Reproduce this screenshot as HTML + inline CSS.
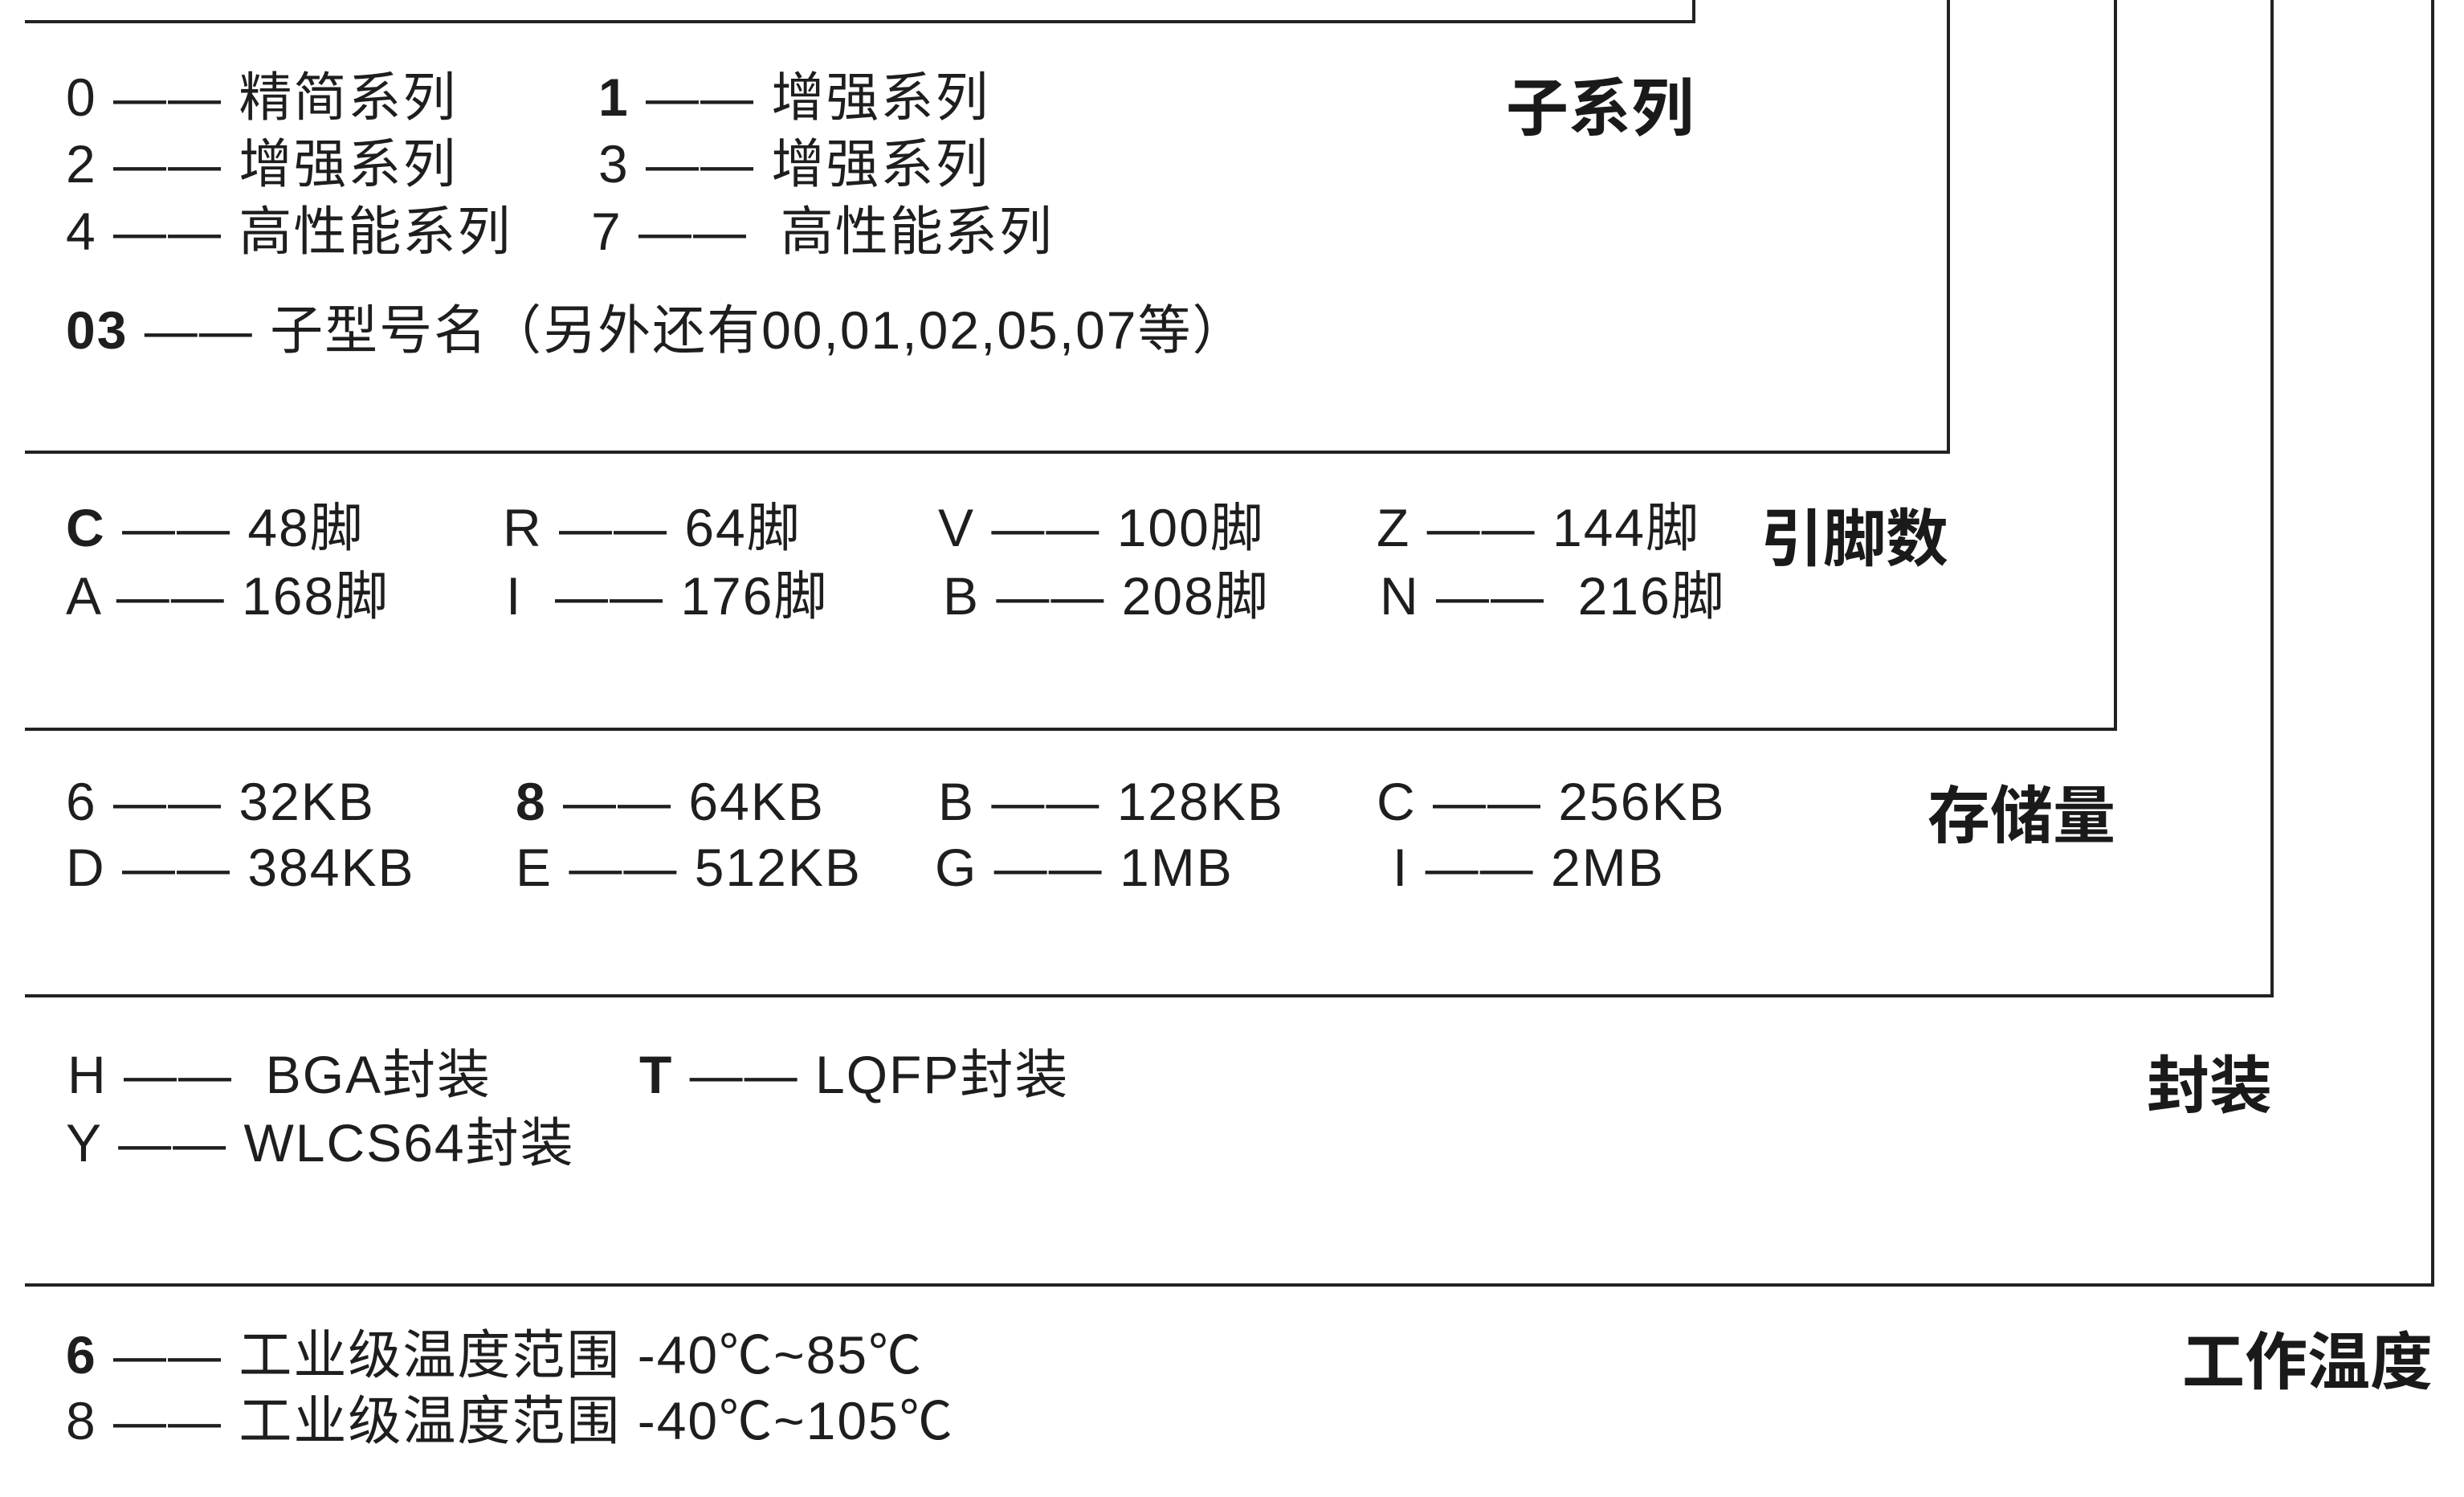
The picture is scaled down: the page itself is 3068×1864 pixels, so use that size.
<!DOCTYPE html>
<html><head><meta charset="utf-8">
<style>
html,body{margin:0;padding:0;background:#fff;}
body{width:3068px;height:1864px;position:relative;overflow:hidden;font-family:"Liberation Sans","Noto Sans CJK SC",sans-serif;color:#1e1e1e;}
.t{position:absolute;font-size:66px;line-height:66px;white-space:pre;letter-spacing:2px;}
.b{font-weight:bold;}
.h{position:absolute;font-size:78px;line-height:80px;font-weight:bold;white-space:pre;font-family:"Noto Sans CJK SC",sans-serif;color:#1a1a1a;}
.hl{position:absolute;height:4px;background:#222;left:31px;}
.vl{position:absolute;width:4px;background:#222;top:0;}
</style></head><body>
<div class="hl" style="top:25px;width:2080px"></div><div class="vl" style="left:2107px;height:29px"></div>
<div class="hl" style="top:561px;width:2397px"></div><div class="vl" style="left:2424px;height:565px"></div>
<div class="hl" style="top:906px;width:2605px"></div><div class="vl" style="left:2632px;height:910px"></div>
<div class="hl" style="top:1238px;width:2800px"></div><div class="vl" style="left:2827px;height:1242px"></div>
<div class="hl" style="top:1598px;width:3000px"></div><div class="vl" style="left:3027px;height:1602px"></div>

<div class="t" style="left:82px;top:88px">0 —— 精简系列</div>
<div class="t" style="left:745px;top:88px"><b>1</b> —— 增强系列</div>
<div class="t" style="left:82px;top:171px">2 —— 增强系列</div>
<div class="t" style="left:745px;top:171px">3 —— 增强系列</div>
<div class="t" style="left:82px;top:255px">4 —— 高性能系列</div>
<div class="t" style="left:736px;top:255px">7 ——  高性能系列</div>
<div class="t" style="left:82px;top:378px"><b>03</b> —— 子型号名（另外还有00,01,02,05,07等）</div>
<div class="h" style="right:959px;top:89px">子系列</div>

<div class="t" style="left:82px;top:624px"><b>C</b> —— 48脚</div>
<div class="t" style="left:626px;top:624px">R —— 64脚</div>
<div class="t" style="left:1168px;top:624px">V —— 100脚</div>
<div class="t" style="left:1714px;top:624px">Z —— 144脚</div>
<div class="t" style="left:82px;top:709px">A —— 168脚</div>
<div class="t" style="left:630px;top:709px">I  —— 176脚</div>
<div class="t" style="left:1174px;top:709px">B —— 208脚</div>
<div class="t" style="left:1718px;top:709px">N ——  216脚</div>
<div class="h" style="right:642px;top:625px">引脚数</div>

<div class="t" style="left:82px;top:965px">6 —— 32KB</div>
<div class="t" style="left:642px;top:965px"><b>8</b> —— 64KB</div>
<div class="t" style="left:1168px;top:965px">B —— 128KB</div>
<div class="t" style="left:1714px;top:965px">C —— 256KB</div>
<div class="t" style="left:82px;top:1047px">D —— 384KB</div>
<div class="t" style="left:642px;top:1047px">E —— 512KB</div>
<div class="t" style="left:1164px;top:1047px">G —— 1MB</div>
<div class="t" style="left:1734px;top:1047px">I —— 2MB</div>
<div class="h" style="right:434px;top:970px">存储量</div>

<div class="t" style="left:84px;top:1305px">H ——  BGA封装</div>
<div class="t" style="left:796px;top:1305px"><b>T</b> —— LQFP封装</div>
<div class="t" style="left:82px;top:1390px">Y —— WLCS64封装</div>
<div class="h" style="right:239px;top:1306px">封装</div>

<div class="t" style="left:82px;top:1654px"><b>6</b> —— 工业级温度范围 -40℃~85℃</div>
<div class="t" style="left:82px;top:1736px">8 —— 工业级温度范围 -40℃~105℃</div>
<div class="h" style="right:39px;top:1650px">工作温度</div>
</body></html>
